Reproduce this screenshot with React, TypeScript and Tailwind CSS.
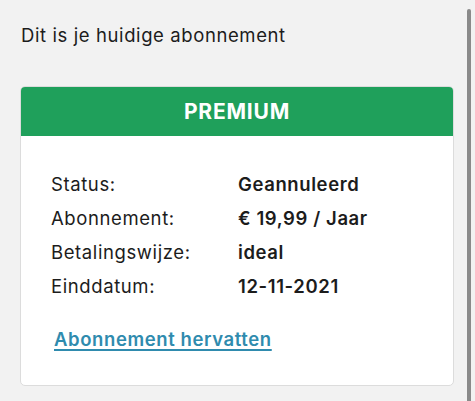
import React from "react";

const rows: [string, string][] = [
  ["Status:", "Geannuleerd"],
  ["Abonnement:", "€ 19,99 / Jaar"],
  ["Betalingswijze:", "ideal"],
  ["Einddatum:", "12-11-2021"],
];

export default function App() {
  return (
    <div
      className="relative w-[475px] h-[401px] overflow-hidden bg-[#f2f2f2] text-[#1c1c1c]"
      style={{ fontFamily: "Inter, 'Noto Sans', sans-serif" }}
    >
      <div className="pl-[21px] pr-[21px] pt-[23px]">
        <p className="text-[18.5px] leading-[24px] tracking-[0.6px]">Dit is je huidige abonnement</p>
        <div className="mt-[39px] w-[434px] -ml-px rounded-[5px] border border-[#dcdcdc] bg-white overflow-hidden">
          <div className="h-[49px] bg-[#1fa05b] flex items-center justify-center">
            <span className="text-white font-bold text-[21px] tracking-[0.8px]">PREMIUM</span>
          </div>
          <div className="pl-[30px] pt-[31px] pb-[33px]">
            {rows.map(([k, v]) => (
              <div key={k} className="flex text-[18.5px] leading-[34px] tracking-[0.6px]">
                <span className="w-[187px] shrink-0">{k}</span>
                <span className="font-semibold">{v}</span>
              </div>
            ))}
            <a
              href="#"
              className="inline-block mt-[24px] ml-[3px] text-[18.5px] leading-[24px] font-semibold text-[#2f8bae] underline underline-offset-[3px] decoration-[1.5px] tracking-[0.6px]"
            >
              Abonnement hervatten
            </a>
          </div>
        </div>
      </div>
      <div className="absolute left-[467px] top-[9px] w-[4px] h-[392px] bg-[#8a8a8a] rounded-t-[2px]" />
    </div>
  );
}
